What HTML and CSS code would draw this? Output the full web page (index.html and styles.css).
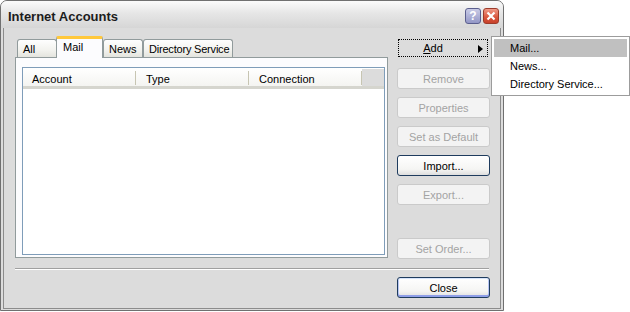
FILE: index.html
```html
<!DOCTYPE html>
<html lang="en">

<head>
    <meta charset="UTF-8">
    <title>Internet Accounts</title>
    <link rel="stylesheet" href="styles.css">
</head>

<body>

    <div class="window">
        <div class="titlebar">
            <span class="title">Internet Accounts</span>
            <div class="caption">
                <span class="cbtn help">?</span>
                <span class="cbtn close">
                    <svg width="10" height="10" viewBox="0 0 10 10">
                        <path d="M1.5 1.5 L8.5 8.5 M8.5 1.5 L1.5 8.5" stroke="#fff" stroke-width="2.2" fill="none" />
                    </svg>
                </span>
            </div>
        </div>

        <div class="client">
            <div class="main">
                <div class="tabbox">
                    <div class="tabs">
                        <div class="tab">All</div>
                        <div class="tab active">Mail</div>
                        <div class="tab">News</div>
                        <div class="tab dir">Directory Service</div>
                    </div>
                    <div class="panel">
                        <div class="list">
                            <div class="list-head">
                                <div class="col">Account</div>
                                <div class="col">Type</div>
                                <div class="col">Connection</div>
                                <div class="filler"></div>
                            </div>
                        </div>
                    </div>
                </div>

                <div class="side">
                    <button class="btn add"><span class="focus"><u>A</u>dd<span class="arrow"></span></span></button>
                    <button class="btn off">Remove</button>
                    <button class="btn off">Properties</button>
                    <button class="btn off">Set as Default</button>
                    <button class="btn on">Import...</button>
                    <button class="btn off">Export...</button>
                    <button class="btn off order">Set Order...</button>
                </div>
            </div>

            <div class="sep"></div>

            <div class="footer">
                <button class="btn on default">Close</button>
            </div>
        </div>
    </div>

    <div class="menu">
        <div class="item sel">Mail...</div>
        <div class="item">News...</div>
        <div class="item">Directory Service...</div>
    </div>

</body>

</html>
```

FILE: styles.css
```css
body {
    margin: 0;
    background: white;
    font-family: "Liberation Sans", Arial, sans-serif;
    font-size: 11px;
    color: black;
}

.window {
    width: 504px;
    height: 311px;
    box-sizing: border-box;
    border: 1px solid #707070;
    border-radius: 7px 7px 0 0;
    background: #dcdcdc;
    display: flex;
    flex-direction: column;
}

.titlebar {
    height: 27px;
    display: flex;
    align-items: center;
    justify-content: space-between;
    padding: 0 4px 0 7px;
    border-radius: 6px 6px 0 0;
    background: linear-gradient(#fbfbfb, #e6e6e6 45%, #d6d6d6);
}

.title {
    font-size: 13px;
    font-weight: bold;
    color: #1c1c1c;
    padding-top: 3px;
}

.caption {
    display: flex;
    gap: 2px;
    padding-top: 3px;
}

.cbtn {
    width: 14px;
    height: 14px;
    border: 1px solid #5b5f8e;
    border-radius: 3px;
    display: flex;
    align-items: center;
    justify-content: center;
    color: white;
    font-weight: bold;
    font-size: 12px;
}

.help {
    background: linear-gradient(#c9cbe6, #9397c6);
}

.close {
    border-color: #9c3b2a;
    background: linear-gradient(#f09a88, #d9553c 60%, #c7412a);
}

.client {
    flex: 1;
    margin: 0 2px 1px;
    border: 1px solid #8c8c8c;
    border-top: 0;
    padding: 9px 0 0 11px;
}

.main {
    display: flex;
    gap: 9px;
}

.tabbox {
    width: 373px;
}

.tabs {
    display: flex;
    align-items: flex-end;
    height: 20px;
    padding-left: 2px;
}

.tab {
    height: 16px;
    padding: 1px 5px 0 5px;
    border: 1px solid #919b9c;
    border-bottom: 0;
    border-radius: 3px 3px 0 0;
    background: linear-gradient(#fefefe, #f2f2ee 60%, #e4e4de);
    margin-right: -1px;
    line-height: 16px;
    white-space: nowrap;
}

.tab:first-child {
    width: 28px;
}

.tab:nth-child(3) {
    width: 28px;
}

.tab.dir {
    width: 83px;
    padding: 1px 0 0 5px;
    margin-left: 1px;
    letter-spacing: -0.2px;
}

.tab.active {
    height: 19px;
    width: 33px;
    padding: 0 6px;
    margin: 0 0 -1px 0;
    border-top: 3px solid #ffc83c;
    border-radius: 2px 2px 0 0;
    background: #fcfcfe;
    position: relative;
    z-index: 1;
    line-height: 16px;
}

.panel {
    height: 201px;
    box-sizing: border-box;
    border: 1px solid #919b9c;
    background: #fcfcfe;
    padding: 9px 2px 0 6px;
}

.list {
    height: 186px;
    border: 1px solid #7f9db9;
    background: white;
}

.list-head {
    display: flex;
    height: 18px;
    border-bottom: 3px solid #d5d5ce;
    background: linear-gradient(#ffffff, #f4f4f1);
}

.col {
    width: 104px;
    padding-left: 9px;
    line-height: 22px;
    position: relative;
}

.col::after {
    content: "";
    position: absolute;
    right: 0;
    top: 3px;
    height: 14px;
    border-right: 1px solid #c7c5b2;
}

.col:nth-child(2),
.col:nth-child(3) {
    width: 103px;
    padding-left: 10px;
}

.filler {
    flex: 1;
    background: #dcdcdc;
    margin-top: 1px;
}

.side {
    width: 93px;
    display: flex;
    flex-direction: column;
    gap: 8px;
}

.btn {
    width: 93px;
    height: 21px;
    box-sizing: border-box;
    border-radius: 3px;
    font-family: "Liberation Sans", Arial, sans-serif;
    font-size: 11px;
    padding: 0;
}

.btn.off {
    border: 1px solid #cacaca;
    background: #f3f3f3;
    color: #a3a3a3;
}

.btn.on {
    border: 1px solid #1f3c5e;
    background: linear-gradient(#ffffff, #f5f5f3 70%, #dedede);
    color: black;
}

.btn.default {
    box-shadow: inset 0 1px 0 #d6e4fb, inset 0 -2px 0 #8f9fe8, inset 1px 0 0 #b8c6f4, inset -1px 0 0 #b8c6f4;
}

.add {
    margin: 1px 0 2px;
    height: 20px;
    border: 0;
    background: #dcdcdc;
    padding: 1px 2px 1px 1px;
}

.focus {
    display: flex;
    align-items: center;
    justify-content: center;
    height: 100%;
    box-sizing: border-box;
    border: 1px dotted black;
    padding-right: 20px;
    position: relative;
    font-size: 11px;
}

.arrow {
    position: absolute;
    right: 4px;
    top: 5px;
    border-left: 5px solid black;
    border-top: 4px solid transparent;
    border-bottom: 4px solid transparent;
}

.order {
    margin-top: 25px;
}

.sep {
    margin: 9px 11px 0 0;
    border-top: 1px solid #a0a0a0;
    border-bottom: 1px solid white;
}

.footer {
    display: flex;
    justify-content: flex-end;
    padding: 7px 10px 0 0;
}

.menu {
    position: absolute;
    left: 491px;
    top: 36px;
    width: 133px;
    padding: 2px;
    border: 1px solid #9c9c9c;
    background: white;
}

.item {
    height: 18px;
    line-height: 18px;
    padding-left: 16px;
    font-size: 11px;
}

.item.sel {
    background: #c0c0c0;
}
```
